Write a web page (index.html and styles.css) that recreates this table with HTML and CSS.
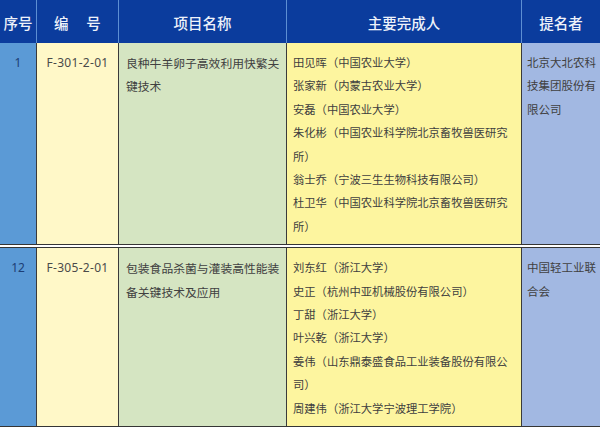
FILE: index.html
```html
<!DOCTYPE html>
<html lang="zh">
<head>
<meta charset="utf-8">
<title>表</title>
<link rel="stylesheet" href="styles.css">
</head>
<body>
<div class="table">
  <div class="row head">
    <div class="c h">序号</div>
    <div class="c h">编　 号</div>
    <div class="c h">项目名称</div>
    <div class="c h">主要完成人</div>
    <div class="c h last">提名者</div>
  </div>
  <div class="row body">
    <div class="c no">1</div>
    <div class="c code">F-301-2-01</div>
    <div class="c name">良种牛羊卵子高效利用快繁关<br>键技术</div>
    <div class="c people">田见晖（中国农业大学）<br>张家新（内蒙古农业大学）<br>安磊（中国农业大学）<br>朱化彬（中国农业科学院北京畜牧兽医研究<br>所）<br>翁士乔（宁波三生生物科技有限公司）<br>杜卫华（中国农业科学院北京畜牧兽医研究<br>所）</div>
    <div class="c org last">北京大北农科<br>技集团股份有<br>限公司</div>
  </div>
  <div class="row body">
    <div class="c no">12</div>
    <div class="c code">F-305-2-01</div>
    <div class="c name">包装食品杀菌与灌装高性能装<br>备关键技术及应用</div>
    <div class="c people">刘东红（浙江大学）<br>史正（杭州中亚机械股份有限公司）<br>丁甜（浙江大学）<br>叶兴乾（浙江大学）<br>姜伟（山东鼎泰盛食品工业装备股份有限公<br>司）<br>周建伟（浙江大学宁波理工学院）</div>
    <div class="c org last">中国轻工业联<br>合会</div>
  </div>
</div>
</body>
</html>
```

FILE: styles.css
```css
html, body {
  margin: 0;
  padding: 0;
  background: #ffffff;
}
body {
  width: 600px;
  height: 428px;
  overflow: hidden;
  font-family: "Noto Sans CJK SC", "Noto Sans", sans-serif;
}
.table {
  width: 600px;
}
.row {
  display: grid;
  grid-template-columns: 37px 82px 168px 235px 1fr;
}
.c {
  box-sizing: border-box;
  white-space: nowrap;
  overflow: hidden;
}
.head {
  height: 43px;
  background: #0b3c9d;
}
.h {
  display: flex;
  align-items: center;
  justify-content: center;
  padding-top: 2px;
  color: #eef2fa;
  font-size: 14.5px;
  font-weight: 500;
  border-right: 1px solid #5d8fd3;
  white-space: pre;
}
.h.last {
  border-right: none;
}
.body {
  border-bottom: 4px double #353535;
}
.body:last-child {
  border-bottom: 1px solid #353535;
}
.body .c {
  border-right: 1px solid #3a3a3a;
  padding-top: 8px;
  padding-bottom: 6px;
  line-height: 23.4px;
  color: #404040;
}
.body .c.last {
  border-right: none;
}
.no {
  background: #5b9ad6;
  text-align: center;
  font-family: "Noto Sans", sans-serif;
  font-size: 12px;
  color: #1d3e75 !important;
}
.code {
  background: #fff8c8;
  text-align: center;
  font-family: "Noto Sans", sans-serif;
  font-size: 12px;
  letter-spacing: 0.3px;
  color: #4a4a4a !important;
}
.name {
  background: #d5e5c2;
  padding-left: 7px;
  font-size: 11.8px;
}
.people {
  background: #fdf59f;
  padding-left: 6px;
  font-size: 11.3px;
}
.org {
  background: #a2b8e2;
  padding-left: 5px;
  font-size: 11.5px;
}
```
